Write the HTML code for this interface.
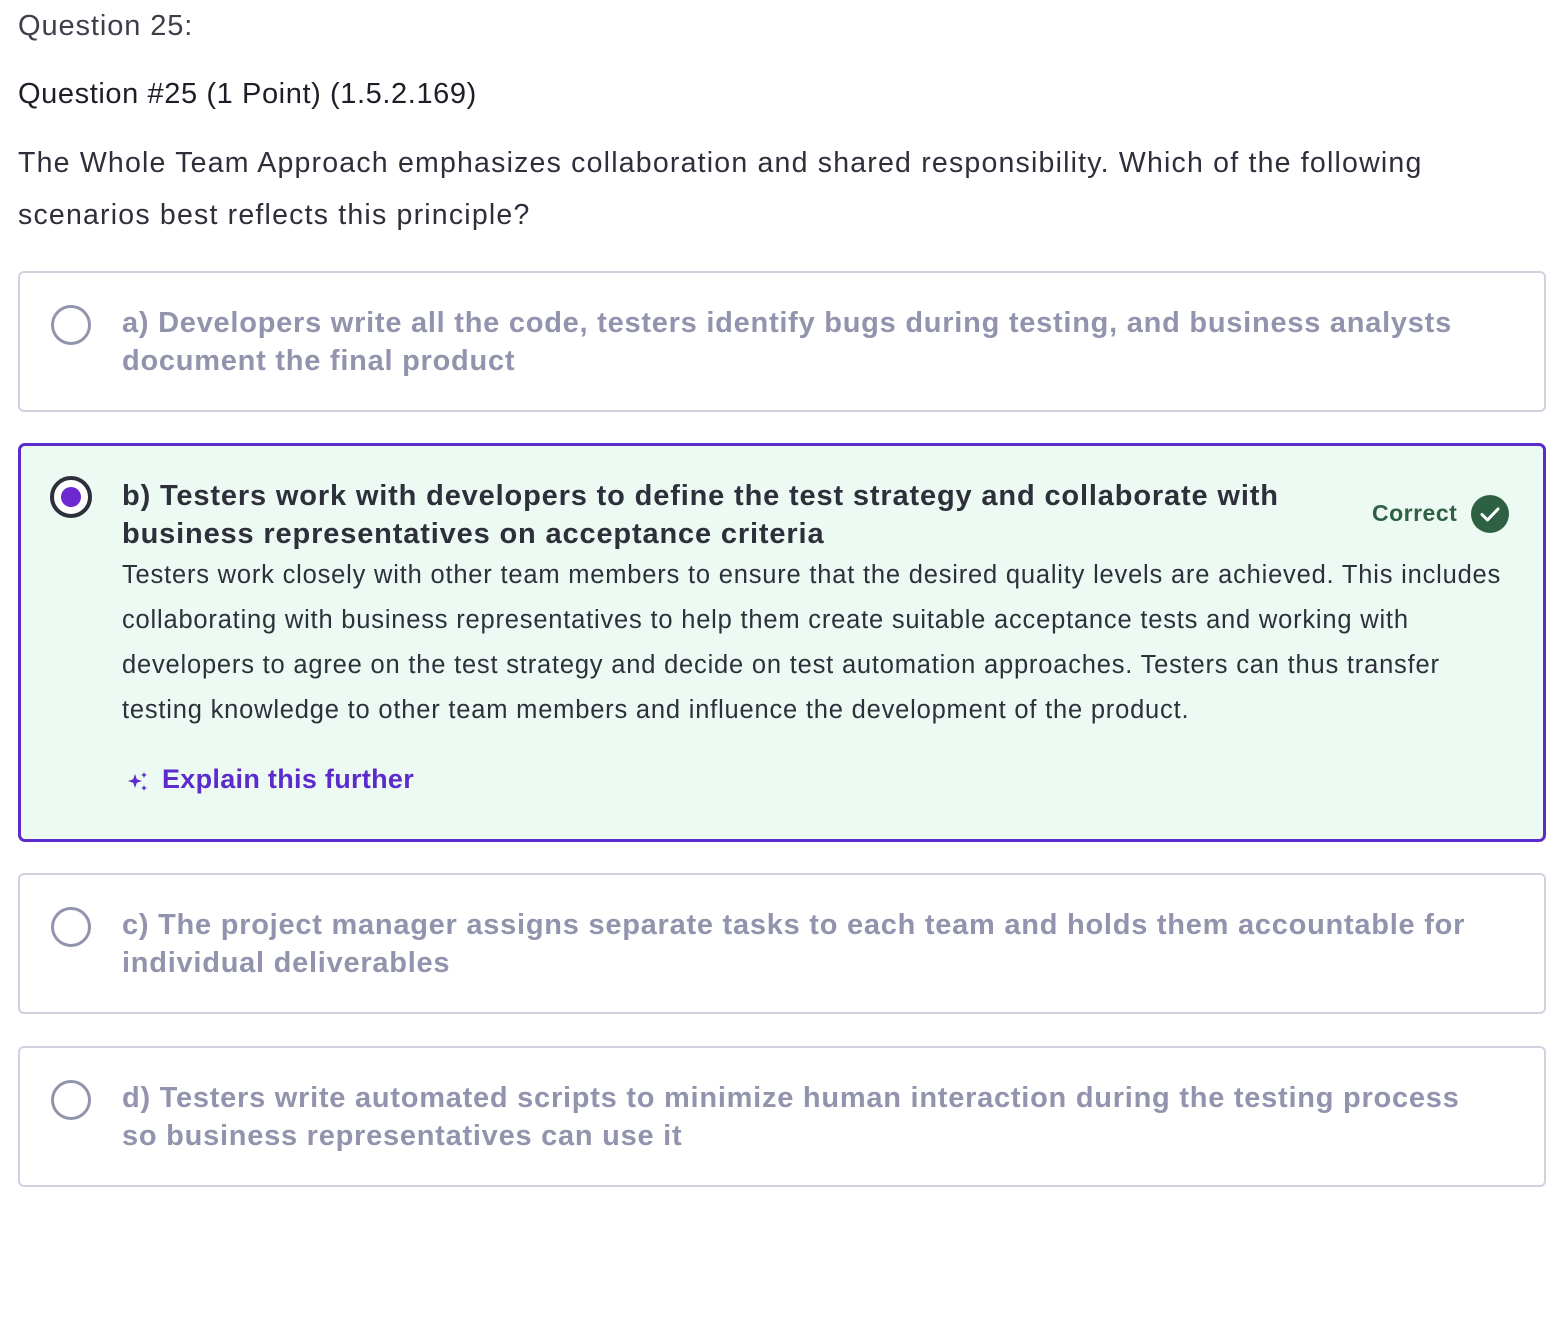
<!DOCTYPE html>
<html><head><meta charset="utf-8"><style>
body{margin:0;background:#fff;font-family:"Liberation Sans",sans-serif;color:#2d2f31;width:1566px;height:1336px;overflow:hidden;position:relative}
.t1{position:absolute;left:18px;top:10px;font-size:29px;color:#3d3f4a;letter-spacing:0.9px}
.t2{position:absolute;left:18px;top:78px;font-size:29px;color:#1d1e27;letter-spacing:0.6px}
.q{position:absolute;left:18px;top:137px;white-space:nowrap;font-size:28.5px;line-height:52px;color:#2d2f3a;letter-spacing:1.2px}
.box{position:absolute;left:18px;width:1528px;border:2px solid #d1d2e0;border-radius:6px;box-sizing:border-box}
.r{position:absolute;left:31px;width:40px;height:40px;border:3px solid #9194ac;border-radius:50%;box-sizing:border-box}
.opt{position:absolute;left:102px;white-space:nowrap;font-size:29px;font-weight:bold;line-height:38px;color:#9194ac;letter-spacing:0.75px}
</style></head><body>
<div class="t1">Question 25:</div>
<div class="t2">Question #25 (1 Point) (1.5.2.169)</div>
<div class="q">The Whole Team Approach emphasizes collaboration and shared responsibility. Which of the following<br>scenarios best reflects this principle?</div>

<div class="box" style="top:271px;height:141px"><div class="r" style="top:32px"></div><div class="opt" style="top:31px">a) Developers write all the code, testers identify bugs during testing, and business analysts<br>document the final product</div></div>

<div class="box" style="top:443px;height:399px;border:3px solid #5b2ccb;background:#edf9f3;border-radius:7px">
<div style="position:absolute;left:29px;top:30px;width:42px;height:42px;border:4px solid #2d2f3a;border-radius:50%;box-sizing:border-box;background:#fff"><div style="position:absolute;left:7px;top:7px;width:20px;height:20px;border-radius:50%;background:#6d28d2"></div></div>
<div class="opt" style="top:31px;left:101px;color:#2d2f3a;letter-spacing:0.85px">b) Testers work with developers to define the test strategy and collaborate with<br>business representatives on acceptance criteria</div>
<div style="position:absolute;left:1351px;top:54px;font-size:23px;font-weight:bold;color:#2e6144;letter-spacing:0.5px">Correct</div>
<div style="position:absolute;left:1450px;top:49px;width:38px;height:38px;border-radius:50%;background:#2e6144"><svg width="38" height="38" viewBox="0 0 38 38"><path d="M11 19.5l5.5 5.5 10.5-11" fill="none" stroke="#fff" stroke-width="3" stroke-linecap="round" stroke-linejoin="round"/></svg></div>
<div style="position:absolute;left:101px;top:107px;white-space:nowrap;font-size:25.5px;line-height:45px;color:#2d2f3a;letter-spacing:0.8px">Testers work closely with other team members to ensure that the desired quality levels are achieved. This includes<br>collaborating with business representatives to help them create suitable acceptance tests and working with<br>developers to agree on the test strategy and decide on test automation approaches. Testers can thus transfer<br>testing knowledge to other team members and influence the development of the product.</div>
<svg style="position:absolute;left:105px;top:324px" width="24" height="24" viewBox="0 0 24 24"><path d="M9 4l1.8 5.2L16 11l-5.2 1.8L9 18l-1.8-5.2L2 11l5.2-1.8z M18 2l.9 2.1L21 5l-2.1.9L18 8l-.9-2.1L15 5l2.1-.9z M18 15l.9 2.1 2.1.9-2.1.9L18 21l-.9-2.1L15 18l2.1-.9z" fill="#5b2ccb"/></svg>
<div style="position:absolute;left:141px;top:318px;font-size:27px;font-weight:bold;color:#5b2ccb;letter-spacing:0.3px">Explain this further</div>
</div>

<div class="box" style="top:873px;height:141px"><div class="r" style="top:32px"></div><div class="opt" style="top:31px">c) The project manager assigns separate tasks to each team and holds them accountable for<br>individual deliverables</div></div>

<div class="box" style="top:1046px;height:141px"><div class="r" style="top:32px"></div><div class="opt" style="top:31px">d) Testers write automated scripts to minimize human interaction during the testing process<br>so business representatives can use it</div></div>
</body></html>
